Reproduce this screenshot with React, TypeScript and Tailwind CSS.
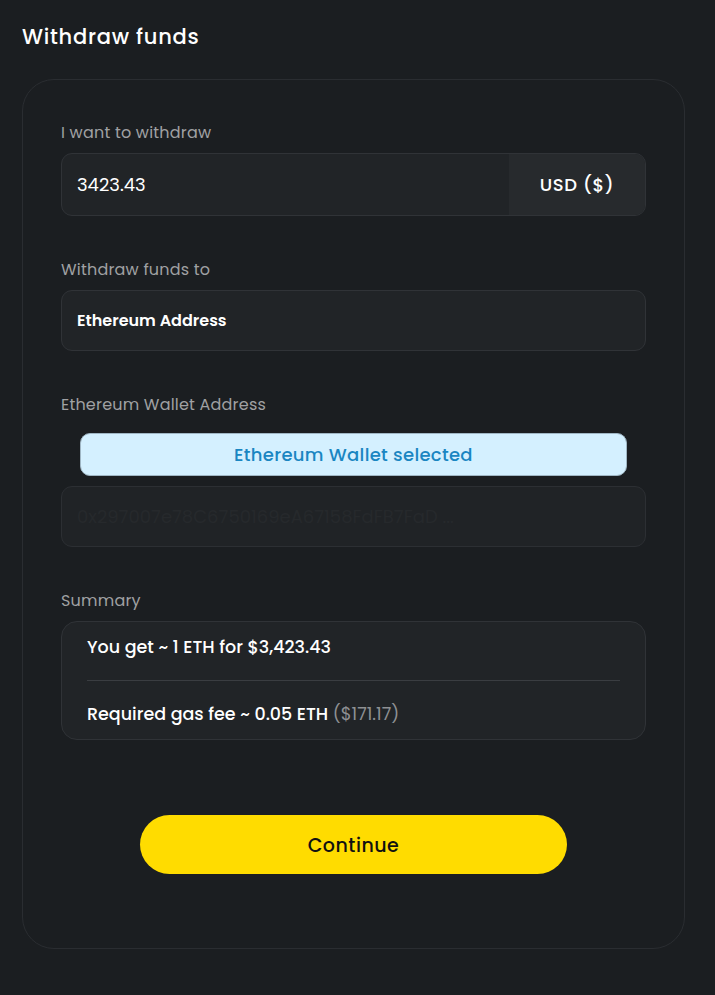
export default function App() {
  return (
    <div className="min-h-[995px] w-full bg-[#1b1e21] px-[22px] pt-[22px] font-['Poppins','Inter',sans-serif] text-white">
      <h1 className="m-0 text-[21px] font-medium leading-[29px] tracking-[0.75px]">
        Withdraw funds
      </h1>

      <div className="mt-[28px] h-[870px] w-[663px] rounded-[32px] border border-[#2a2d31] px-[38px] pt-[42px]">
        <div className="flex flex-col">
          <label className="text-[16px] leading-[22px] tracking-[0.2px] text-[#a0a1a3]">I want to withdraw</label>
          <div className="mt-[9px] flex h-[63px] overflow-hidden rounded-[11px] border border-[#303337] bg-[#212427]">
            <div className="flex flex-1 items-center pl-[15px] text-[18px]">3423.43</div>
            <div className="flex w-[136px] items-center justify-center bg-[#272a2d] text-[18px] font-medium tracking-[0.6px]">
              USD ($)
            </div>
          </div>

          <label className="mt-[43px] text-[16px] leading-[22px] tracking-[0.2px] text-[#a0a1a3]">Withdraw funds to</label>
          <div className="mt-[9px] flex h-[61px] items-center rounded-[11px] border border-[#303337] bg-[#212427] pl-[15px] text-[16px] font-semibold">
            Ethereum Address
          </div>

          <label className="mt-[43px] text-[16px] leading-[22px] tracking-[0.2px] text-[#a0a1a3]">Ethereum Wallet Address</label>
          <div className="mx-[19px] mt-[17px] flex h-[43px] items-center justify-center rounded-[10px] border border-[#9fb6c4] bg-[#d4f0ff] text-[18px] font-medium tracking-[0.3px] text-[#1a86c2]">
            Ethereum Wallet selected
          </div>
          <div className="mt-[10px] flex h-[61px] items-center rounded-[11px] border border-[#2c2f33] bg-[#202326] pl-[15px] text-[18px] text-[#26292c]">
            0x297007e78C6750169eA67158FdFB7FaD ...
          </div>

          <label className="mt-[43px] text-[16px] leading-[22px] tracking-[0.2px] text-[#a0a1a3]">Summary</label>
          <div className="mt-[9px] h-[119px] rounded-[16px] border border-[#303337] bg-[#212427] px-[25px] pt-[13px]">
            <p className="text-[17.5px] font-medium leading-[24px]">You get ~ 1 ETH for $3,423.43</p>
            <div className="mt-[21px] h-px bg-[#3a3d41]" />
            <p className="mt-[21px] text-[17.5px] font-medium leading-[24px]">
              Required gas fee ~ 0.05 ETH <span className="font-normal text-[#8e9093]">($171.17)</span>
            </p>
          </div>

          <button
            type="button"
            className="mx-auto mt-[75px] flex h-[59px] w-[427px] items-center justify-center rounded-full bg-[#ffdc00] pt-[3px] text-[19px] font-medium tracking-[0.5px] text-[#111]"
          >
            Continue
          </button>
        </div>
      </div>
    </div>
  );
}
